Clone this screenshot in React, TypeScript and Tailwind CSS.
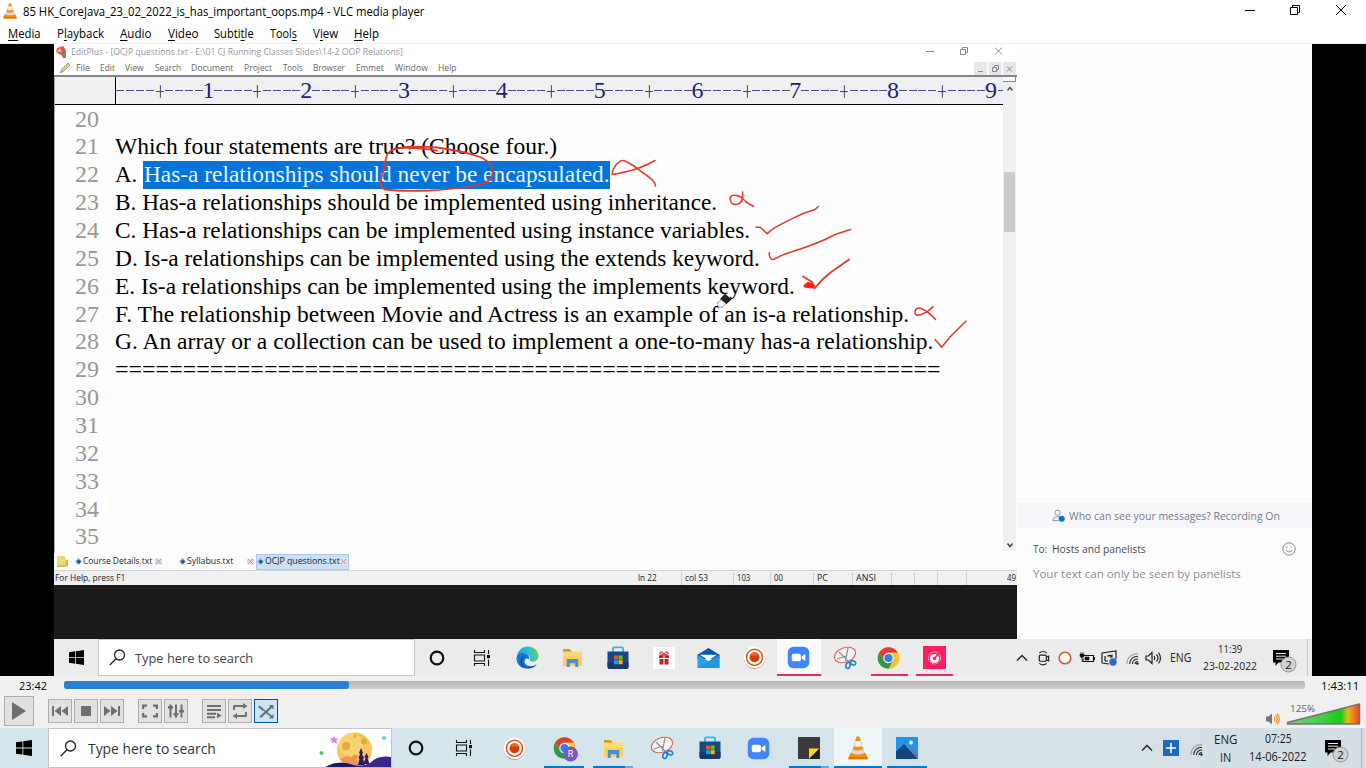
import { useLayoutEffect, useRef, useState, type ReactNode } from "react";

/* Text squeezed or stretched horizontally so that it fills its box. */
function Fit({ c, children }: { c: string; children: ReactNode }) {
  const outer = useRef<HTMLSpanElement>(null);
  const inner = useRef<HTMLSpanElement>(null);
  const [k, setK] = useState(1);
  useLayoutEffect(() => {
    if (outer.current && inner.current) setK(outer.current.offsetWidth / inner.current.offsetWidth);
  }, []);
  return (
    <span ref={outer} className={"block shrink-0 whitespace-nowrap " + c}>
      <span ref={inner} className="inline-block origin-left" style={{ transform: `scaleX(${k})` }}>
        {children}
      </span>
    </span>
  );
}

const Cone = ({ c }: { c: string }) => (
  <svg viewBox="0 0 20 24" preserveAspectRatio="none" className={c}>
    <path d="M2.5 17h15l2.3 5.2q.2 1.3-1 1.3H1.2q-1.2 0-1-1.3z" fill="#f08a0c" />
    <path d="M8.5.8q1.5-1 3 0L17 19q-7 4-14 0z" fill="#f58f12" />
    <path d="M7.4 5h5.2l1.5 5q-4 1.8-8.2 0z" fill="#e9edf0" />
    <path d="M4.7 13.5q5.300 2.200 10.600 0l1 3.700q-6.200 2.600-12.600 0z" fill="#d5dbe0" />
    <path d="M1 22h18" stroke="#c96405" strokeWidth="1" />
  </svg>
);
const Win = ({ c }: { c: string }) => (
  <svg viewBox="0 0 16 16" className={c}>
    <path d="M0 2.300 6.500 1.400v6.200H0zM7.300 1.300 16 0v7.600H7.300zM0 8.400h6.500v6.200L0 13.700zM7.300 8.400H16V16l-8.700-1.300z" fill="#000" />
  </svg>
);
const Search = () => (
  <svg viewBox="0 0 17 17" className="size-[17px] shrink-0" fill="none" stroke="#222" strokeWidth="1.300">
    <circle cx="10.500" cy="6" r="5" /><path d="M7 9.800.8 16" />
  </svg>
);
const Ring = () => (
  <svg viewBox="0 0 16 16" className="size-4"><circle cx="8" cy="8" r="6.300" fill="none" stroke="#111" strokeWidth="2.200" /></svg>
);
const TaskView = () => (
  <svg viewBox="0 0 18 16" className="h-4 w-[18px]" fill="none" stroke="#111" strokeWidth="1.100">
    <path d="M1.500 0v2.500h10V0M1.500 16v-2.500h10V16M1.500 5h10v6h-10zM15.500 0v4M15.500 9.500V16" /><path d="M14 5h3v3.200h-3z" fill="#111" stroke="none" />
  </svg>
);
const Edge = () => (
  <svg viewBox="0 0 24 24" className="size-[23px]">
    <defs>
      <linearGradient id="eg" x1="0" x2="1" y1=".3" y2=".2"><stop offset="0" stopColor="#1d9fe0" /><stop offset=".55" stopColor="#2bc3c8" /><stop offset="1" stopColor="#6cd251" /></linearGradient>
    </defs>
    <path d="M1 11C2 4.500 6.500.5 12.300.5 18.500.5 23.500 5 23.500 10.300c0 4-3 6-6 6-2.500 0-3.800-1-3.300-2 1.500-2.500-.5-5.800-4.500-5.800C5 8.500 2 10 1 11z" fill="url(#eg)" />
    <path d="M.5 12.500C1 8 5 6.500 9.500 7.700 13.500 8.800 14.500 12 13.300 14c-1-1.600-4.500-1.200-4.300 2.500.2 3.500 4.500 5.500 9.500 4-2 2-4.500 3-7.500 3C5 23.500.2 18.500.5 12.500z" fill="#1478cc" />
    <path d="M9 10.500c-2.500 2-3.600 6-1.200 9.200 2.500 3.400 8 3.600 13.700-1-1 2-3 3.800-5 4.200-6 1.500-11.500-1-12-5.500C4.200 14 6 11 9 10.500z" fill="#164e9e" />
  </svg>
);
const Folder = () => (
  <svg viewBox="0 0 22 20" className="h-[19px] w-[21px]">
    <path d="M1 1h7l2 2.500v4H1z" fill="#d99b16" /><path d="M1 4h20v15H1z" fill="#ffcf5c" /><path d="M1 4h20v5H1z" fill="#ffda7b" />
    <path d="M5 11.500h12V20h-3v-4H8v4H5z" fill="#3f93d3" />
  </svg>
);
const Store = () => (
  <svg viewBox="0 0 24 24" className="size-6">
    <path d="M7 6.500V2.600q0-1.300 1.300-1.300h7.400Q17 1.300 17 2.600v3.900" fill="none" stroke="#34b5ea" strokeWidth="1.800" />
    <path d="M1.500 5.500h21v15q0 2.500-2.500 2.500H4q-2.500 0-2.500-2.500z" fill="#174a80" />
    <path d="M1.500 16h21v4.500Q22.500 23 20 23H4q-2.500 0-2.500-2.500z" fill="#17396b" />
    <path d="M8 9.500h4v4H8z" fill="#f25022" /><path d="M12.600 9.500h4v4h-4z" fill="#7fba00" /><path d="M8 14.200h4v4H8z" fill="#00a4ef" /><path d="M12.600 14.200h4v4h-4z" fill="#ffb900" />
  </svg>
);
const Gift = () => (
  <svg viewBox="0 0 22 22" className="size-[22px]">
    <path d="M0 0h22v22H0z" fill="#fff" /><path d="M6 8.300h4.500v2.800H6zM11.500 8.300H16v2.800h-4.500zM6.500 12h4v5.500h-4zM11.500 12h4v5.500h-4z" fill="#b9261e" />
    <path d="M11 8Q6 7.500 7 5.300 9 3.500 11 8q2-4.500 4-2.700Q16 7.500 11 8z" fill="none" stroke="#d2453a" strokeWidth="1.200" />
  </svg>
);
const Mail = () => (
  <svg viewBox="0 0 24 22" className="h-[22px] w-[23px]">
    <path d="M.5 7.500 12 .5l11.500 7V12H.5z" fill="#0758ae" />
    <path d="M.5 7.500 12 14.500l11.500-7v14H.5z" fill="#2ba4e8" /><path d="M23.500 7.500v14H.5z" fill="#1c8fdc" opacity=".65" /><path d="M3 7.500h18l-9 6z" fill="#f6fafd" />
  </svg>
);
const Rec = () => (
  <svg viewBox="0 0 24 24" className="size-[23px]">
    <circle cx="12" cy="12.800" r="11" fill="#8f8480" /><circle cx="12" cy="11.800" r="11.200" fill="#fff" />
    <circle cx="12" cy="11.800" r="8.400" fill="none" stroke="#d9531b" strokeWidth="1.500" /><circle cx="12" cy="11.800" r="5.200" fill="#d83a04" /><path d="M7.300 10a5 5 0 0 1 9.400 0z" fill="#ec6a1a" />
  </svg>
);
const Zoom = () => (
  <svg viewBox="0 0 24 24" className="size-[23px]">
    <rect x=".8" y=".8" width="22.400" height="22.400" rx="6" fill="#3f86fb" />
    <rect x="5" y="8" width="9.500" height="8" rx="1.800" fill="#fff" /><path d="m15.200 11 4-2.700v7.400l-4-2.700z" fill="#fff" />
  </svg>
);
const Snip = () => (
  <svg viewBox="0 0 24 24" className="size-6" fill="none">
    <ellipse cx="12" cy="9" rx="11" ry="7.200" transform="rotate(-20 12 9)" fill="#f8f4f3" stroke="#dc635e" strokeWidth="1.100" />
    <path d="M6 6l10 10M15 2 12.500 15M4 13l9-3" stroke="#89929a" strokeWidth="1.300" />
    <ellipse cx="15" cy="19.500" rx="2.100" ry="3" transform="rotate(15 15 19.500)" stroke="#1b83ca" strokeWidth="1.600" />
    <ellipse cx="20" cy="16.800" rx="2.800" ry="1.900" transform="rotate(25 20 16.800)" stroke="#1b83ca" strokeWidth="1.600" />
  </svg>
);
const Chrome = ({ badge }: { badge?: boolean }) => (
  <svg viewBox="0 0 25 26" className="h-[26px] w-[25px]">
    <circle cx="11.500" cy="12" r="10.800" fill="#f9c623" />
    <path d="M2.150 6.600A10.800 10.800 0 0 1 20.850 6.600H11.500l-4.700 8z" fill="#e0402f" />
    <path d="M2.150 6.600A10.800 10.800 0 0 0 11.500 22.800l4.700-8.100H6.800z" fill="#2d9a4b" />
    <circle cx="11.500" cy="12" r="5.200" fill="#fff" /><circle cx="11.500" cy="12" r="4.100" fill="#3b7de8" />
    {badge && <circle cx="17.500" cy="18" r="7.500" fill="#7e57c2" />}
    {badge && <text x="17.500" y="21.300" textAnchor="middle" fontSize="9" fontFamily="Roboto, sans-serif" fill="#fff">R</text>}
  </svg>
);
const Timer = () => (
  <svg viewBox="0 0 23 23" className="size-[23px]">
    <path d="M0 0h23v23H0z" fill="#ff1d5e" /><circle cx="11.500" cy="12" r="6" fill="none" stroke="#fff" strokeWidth="1" strokeDasharray="1 .8" />
    <circle cx="11.500" cy="12.500" r="4.600" fill="#fff" /><circle cx="11.500" cy="12.500" r="1.700" fill="#ff1d5e" /><path d="m11.500 12.500 4-5" stroke="#ff1d5e" strokeWidth="1.300" />
  </svg>
);
const Notes = () => (
  <svg viewBox="0 0 22 22" className="size-[22px]"><path d="M0 0h22v22H0z" fill="#3a3a3a" /><path d="M11 11.500h10.500L11 22z" fill="#ffd814" /><path d="M21.500 11.500V22H11z" fill="#222" /></svg>
);
const Photos = () => (
  <svg viewBox="0 0 22 22" className="size-[22px]">
    <path d="M0 0h22v22H0z" fill="#2196e8" /><path d="M10 14.500 15 10l7 7.500V22H8z" fill="#6377b5" /><path d="M0 14.500 8 7l13.500 15H0z" fill="#13447c" /><circle cx="15" cy="5.500" r="1.900" fill="#fff" />
  </svg>
);
const Wifi = () => (
  <svg viewBox="0 0 14 14" className="size-[13px] shrink-0" fill="none" strokeWidth="1.100">
    <path d="M1 13C1 6 6 1.500 13 1.500" stroke="#999" /><path d="M4 13C4 8 7.500 4.500 13 4.500M7 13c0-3.500 2.500-5.500 6-5.500M9.800 13c0-1.500 1.200-2.700 3.200-2.700" stroke="#222" /><circle cx="12.300" cy="12.500" r="1.300" fill="#111" />
  </svg>
);
const Chev = () => (
  <svg viewBox="0 0 12 8" className="h-2 w-3 shrink-0" fill="none" stroke="#222" strokeWidth="1.400"><path d="m1 6.500 5-5 5 5" /></svg>
);
const Notif = () => (
  <svg viewBox="0 0 26 26" className="size-[26px] shrink-0">
    <path d="M1 2h16v12.500H6.500L3.500 18v-3.500H1z" fill="#000" /><path d="M4 5.500h10M4 8.200h10M4 11h7" stroke="#eee" strokeWidth="1" />
    <circle cx="16.500" cy="16.500" r="7.500" fill="#d1d3d4" stroke="#929292" /><text x="16.500" y="20.500" textAnchor="middle" fontSize="11.500" fontFamily="Open Sans, sans-serif" fill="#111">2</text>
  </svg>
);
const WinButtons = () => (
  <div className="flex pt-[5px]">
    <svg viewBox="0 0 10 10" className="mr-[35px] size-[10px]"><path d="M0 5.500h10" stroke="#000" /></svg>
    <svg viewBox="0 0 10 10" className="mr-[36px] size-[10px]" fill="none" stroke="#000"><path d="M.5 2.500h7v7h-7zM2.500 2.500v-2h7v7h-2" /></svg>
    <svg viewBox="0 0 10 10" className="mr-[20px] size-[10px]"><path d="m0 0 10 10M10 0 0 10" stroke="#000" /></svg>
  </div>
);

const menus: [string, string, string, string][] = [
  ["", "M", "edia", "w-[33px]"], ["P", "l", "ayback", "w-[47px]"], ["", "A", "udio", "w-[32px]"], ["", "V", "ideo", "w-[30px]"],
  ["Subti", "t", "le", "w-[40px]"], ["Tool", "s", "", "w-[27px]"], ["V", "i", "ew", "w-[25px]"], ["", "H", "elp", "w-[25px]"],
];
const editMenus = [
  ["File", "ml-[5px] w-[14px]"], ["Edit", "ml-[10px] w-[15px]"], ["View", "ml-[10px] w-[19px]"], ["Search", "ml-[11px] w-[26px]"],
  ["Document", "ml-[10px] w-[42px]"], ["Project", "ml-[11px] w-[28px]"], ["Tools", "ml-[11px] w-[20px]"], ["Browser", "ml-[10px] w-[32px]"],
  ["Emmet", "ml-[11px] w-[28px]"], ["Window", "ml-[11px] w-[33px]"], ["Help", "ml-[10px] w-[19px]"],
];
const lines = [
  ["", ""],
  ["Which four statements are true? (Choose four.)", "w-[442px]"],
  ["", ""],
  ["B. Has-a relationships should be implemented using inheritance.", "w-[602px]"],
  ["C. Has-a relationships can be implemented using instance variables.", "w-[635px]"],
  ["D. Is-a relationships can be implemented using the extends keyword.", "w-[645px]"],
  ["E. Is-a relationships can be implemented using the implements keyword.", "w-[680px]"],
  ["F. The relationship between Movie and Actress is an example of an is-a relationship.", "w-[794px]"],
  ["G. An array or a collection can be used to implement a one-to-many has-a relationship.", "w-[818px]"],
  ["=============================================================", "w-[826px]"],
  ["", ""], ["", ""], ["", ""], ["", ""], ["", ""], ["", ""],
];
const ruler = Array.from({ length: 90 }, (_, i) => ((i + 1) % 10 === 0 ? String((i + 1) / 10) : (i + 1) % 5 === 0 ? "+" : "-"));

const Diamond = ({ c }: { c: string }) => (
  <svg viewBox="0 0 7 7" className={"size-[7px] shrink-0 " + c}><path d="m3.500 0 3.500 3.500L3.500 7 0 3.500z" fill="#8aa9c9" /><circle cx="3.800" cy="3.700" r="1.800" fill="#1b5796" /></svg>
);
const Close = ({ c }: { c: string }) => (
  <svg viewBox="0 0 7 7" className={"size-[7px] shrink-0 " + c}><path d="M0 .5h7v6H0z" fill="#eadadd" /><path d="m1 1 5 5M6 1 1 6" stroke="#cf8e95" /></svg>
);

function Editor() {
  return (
    <div className="flex h-[595px] w-[963px] shrink-0 flex-col bg-[#fdfdfd]">
      <div className="flex h-4 items-center bg-white text-[9.500px] text-[#969696]">
        <svg viewBox="0 0 12 12" className="ml-[1px] size-3 shrink-0"><path d="M2 2 8 0l3 4v7L6 9 1 6z" fill="#dc5b4f" /><path d="M6 8h5v4H8z" fill="#5f9b66" /><path d="m1 6 4-4 2 4z" fill="#efada4" /></svg>
        <Fit c="ml-[4px] w-[332px]">EditPlus - [OCJP questions.txt - E:\01 CJ Running Classes Slides\14-2 OOP Relations]</Fit>
        <svg viewBox="0 0 78 10" className="ml-[523px] -mt-[3px] h-[10px] w-[78px] shrink-0" fill="none" stroke="#8b8b8b"><path d="M0 5.500h8M34.500 3.500h5v5h-5zM36.500 3.500v-2h5v5h-2M69 1.500l7 7M76 1.500l-7 7" /></svg>
      </div>
      <div className="flex h-[15px] items-center bg-white pt-px text-[9.500px] text-[#656565]">
        <svg viewBox="0 0 12 12" className="ml-[5px] size-3 shrink-0"><path d="m1 11 2-4 6-6 2 2-6 6z" fill="#d7cf9a" stroke="#8b855d" strokeWidth=".7" /></svg>
        {editMenus.map(([t, c]) => <Fit key={t} c={c}>{t}</Fit>)}
        <svg viewBox="0 0 42 13" className="ml-auto mr-[1px] h-[13px] w-[42px] shrink-0"><path d="M0 0h13v13H0zM14.500 0h13v13h-13zM29 0h13v13H29z" fill="#e7e7e9" /><path d="M4 9.500h5M18.500 5.500h4v4h-4zM20.500 5v-1.500h4v4H23M33 4.500l5 5M38 4.500l-5 5" stroke="#858593" fill="none" /></svg>
      </div>
      <div className="flex h-[478px] border-t-2 border-[#85858a]">
        <div className="flex w-[949px] shrink-0 flex-col border-l border-[#aaa]">
          <div className="flex h-[28px] shrink-0 border-b border-black bg-[#f0f0f2] font-['Liberation_Serif',serif] text-[24px] text-[#1e1e7c]">
            <div className="w-[60.500px] shrink-0 border-r border-black" />
            <div className="flex overflow-hidden">
              {ruler.map((r, i) => (
                <span key={i} className="flex w-[9.790px] shrink-0 items-center justify-center leading-[26px]">
                  {r === "-" ? <i className="block h-px w-[8px] bg-[#4a4a86]" /> : r === "+" ? (
                    <svg viewBox="0 0 10 16" className="h-4 w-[10px]"><path d="M1 8.500h8M5.500 2v13" stroke="#3c3c80" /></svg>
                  ) : <b className="-mt-px font-normal">{r}</b>}
                </span>
              ))}
              <span className="flex items-center pl-[2px]"><i className="block h-px w-[5px] bg-[#4a4a86]" /></span>
            </div>
          </div>
          <div className="flex flex-col pt-[0.600px] font-['Liberation_Serif',serif] text-[24px] leading-[27.870px] text-black">
            {lines.map(([t, c], i) => (
              <div key={i} className="flex h-[27.870px] items-center">
                <span className="w-[60px] shrink-0 pl-[20px] text-[#979797]">{20 + i}</span>
                {i === 2 && (
                  <>
                    <Fit c="w-[22px]">A.</Fit>
                    <span className="ml-[6px] flex h-[28px] items-center bg-[#0474da] pl-px text-[#e8f3ff]"><Fit c="w-[466px]">Has-a relationships should never be encapsulated.</Fit></span>
                  </>
                )}
                {t && <Fit c={c}>{t}</Fit>}
              </div>
            ))}
          </div>
        </div>
        <div className="flex h-[474px] w-[13px] flex-col items-center bg-[#f0eff1]">
          <div className="h-[5px] w-full border-b border-r border-[#888] bg-[#f8f8f8]" />
          <svg viewBox="0 0 8 6" className="mt-[4px] h-[6px] w-2" fill="none" stroke="#555" strokeWidth="1.500"><path d="m1.500 4.500 2.500-3 2.500 3" /></svg>
          <div className="mt-[80px] h-[60px] w-[11px] bg-[#cbcacc]" />
          <svg viewBox="0 0 8 6" className="mt-auto mb-[3px] h-[6px] w-2" fill="none" stroke="#444" strokeWidth="1.500"><path d="m1.500 1.500 2.500 3 2.500-3" /></svg>
        </div>
      </div>
      <div className="flex h-[17px] items-center text-[9.500px] text-[#222]">
        <svg viewBox="0 0 12 12" className="ml-[3px] size-[11px] shrink-0"><path d="M0 0h9v12H0z" fill="#efd779" /><path d="M9 4h3v7H9z" fill="#dcb743" /><path d="M0 10h10v2H0z" fill="#dabb51" /></svg>
        <Diamond c="ml-[7px]" /><Fit c="ml-[1px] w-[69px]">Course Details.txt</Fit><Close c="ml-[3px]" />
        <Diamond c="ml-[17px]" /><Fit c="ml-[1px] w-[46px]">Syllabus.txt</Fit><Close c="ml-[14px]" />
        <div className="ml-[2px] flex h-4 w-[93px] items-center border border-[#a9c7e8] bg-[#cbe0fa]">
          <Diamond c="" /><Fit c="ml-[1px] w-[75px]">OCJP questions.txt</Fit><Close c="" />
        </div>
      </div>
      <div className="flex h-[15px] shrink-0 items-center border-t border-[#d4d4d6] bg-[#f0eff1] pt-px text-[9.500px] text-[#222]">
        <Fit c="ml-[1px] w-[70px]">For Help, press F1</Fit>
        <Fit c="ml-[513px] w-[19px]">ln 22</Fit>
        {[["col 53", "w-[23px]", "ml-[24px] w-[52px]"], ["103", "w-[13px]", "w-[37px]"], ["00", "w-[9px]", "w-[43px]"], ["PC", "w-[11px]", "w-[39px]"], ["ANSI", "w-[20px]", "w-[39px]"]].map(([t, c, b]) => (
          <div key={t} className={"flex h-full shrink-0 items-center border-l border-[#d0d0d0] pl-[3px] " + b}><Fit c={c}>{t}</Fit></div>
        ))}
        <div className="h-full w-[23px] border-l border-[#d0d0d0]" /><div className="h-full w-[23px] border-l border-[#d0d0d0]" /><div className="h-full w-[29px] border-l border-[#d0d0d0]" />
        <div className="flex h-full items-center border-l border-[#d0d0d0] pl-[40px]"><Fit c="w-[9px]">49</Fit></div>
      </div>
      <div className="grow bg-[#1a1a1a]" />
    </div>
  );
}

/* Pen strokes and the eraser pointer drawn over the lesson text. */
const Ink = () => (
  <svg viewBox="54 44 963 595" className="pointer-events-none absolute left-0 top-0 h-[595px] w-[963px]" fill="none" stroke="#e23a2c" strokeWidth="1.500" strokeLinecap="round" strokeLinejoin="round">
    <path d="M437 150.700Q420 147.500 400 148Q388 149 386 158Q385 166 382.500 174Q378 187 385 189.500Q400 191.500 430 190.500Q465 188.500 483 183.500Q494 180 492.500 169Q491 162 480 157Q463 151 437 147.500Q420 146 405 147" strokeWidth="1.800" />
    <path d="M655 160.500Q642 168 627 171.500Q616 174 612.500 174.500Q611 172 616 165Q621 159 625 161Q635 166 641 171.500Q656 181 655.500 186" />
    <path d="M742.500 192Q744 202 738 204Q731 206 730 199Q730 194 737 195.500Q742 197 746 202L753.500 206.500" />
    <path d="M756 227.300h4l7.300 6.300 5-4.300q5-3.300 20-10.600Q804 212.500 815 209.500l3.300-3" />
    <path d="M769.500 252.700q-1 4 1.500 6 2 2 5-.5 7-4 16-6.500Q820 243 835 234.500l15.600-5" />
    <path d="m803 276.500 9 5.500 2.500 6.500Q824 277 832 271.500q10-7 17-12" strokeWidth="1.800" />
    <path d="m805 286 3-2.500 5 1.500 0 2-6-.5" strokeWidth="3" stroke="#fb2616" />
    <path d="M935.500 319.500Q928 311 920 308q-5-.5-5 4.500 0 4 6 2Q930 311 933 306.500" />
    <path d="m935 339.500 4 4.500 2.500 3.300q4-4.800 9-10.800L966 321" />
    <path d="m717.500 303 5.500-5 4 5-5 4.500q-5 0-4.500-4.500z" fill="#fafafa" stroke="#888" strokeWidth=".8" /><path d="m720 299 5-5.500 6.500 6-5 4.500z" fill="#222" stroke="none" />
  </svg>
);

function Chat() {
  return (
    <div className="flex w-[295px] flex-col bg-[#fdfdfd]">
      <div className="mt-[459px] flex h-[25px] items-center bg-[#f7f7fb] text-[11.500px] text-[#777988]">
        <svg viewBox="0 0 14 14" className="ml-[35px] size-[13px] shrink-0" fill="none" stroke="#8b8b96"><circle cx="6" cy="4" r="2.800" /><path d="M7 12.500H1q0-4 5-4h3" /><circle cx="10.500" cy="10.500" r="3.300" fill="#0b6ee8" stroke="none" /></svg>
        <Fit c="ml-[4px] w-[211px]">Who can see your messages? Recording On</Fit>
      </div>
      <div className="mt-[13px] flex h-4 items-center text-[11.500px] text-[#4c4c55]">
        <Fit c="ml-[16px] w-[14px]">To:</Fit><Fit c="ml-[5px] w-[94px]">Hosts and panelists</Fit>
        <svg viewBox="0 0 14 14" className="ml-[136px] size-[14px] shrink-0" fill="none" stroke="#888"><circle cx="7" cy="7" r="6.200" /><path d="M4 8q3 4 6 0" /><path d="M5 4.500v1.500M9 4.500v1.500" /></svg>
      </div>
      <Fit c="ml-[16px] mt-[9px] w-[208px] text-[11.500px] leading-4 text-[#8c8c99]">Your text can only be seen by panelists</Fit>
    </div>
  );
}

function InnerTaskbar() {
  return (
    <div className="flex h-[37px] bg-[#ebebec] text-[#222]">
      <div className="flex w-[44px] items-center justify-center"><Win c="size-[15px]" /></div>
      <div className="flex h-[37px] w-[317px] items-center border border-[#c8c8c8] bg-white pl-[10px] text-[#444]"><Search /><Fit c="ml-[9px] mt-px w-[118px] text-[13.500px]">Type here to search</Fit></div>
      <div className="flex w-[44px] items-center justify-center"><Ring /></div>
      <div className="flex w-[46px] items-center justify-center"><TaskView /></div>
      {[<Edge />, <Folder />, <Store />, <Gift />, <Mail />, <Rec />].map((e, i) => <div key={i} className="flex w-[45.300px] shrink-0 items-center justify-center">{e}</div>)}
      <div className="flex w-[44px] items-center justify-center border-b-2 border-[#ea2b61] bg-[#fafafa] pt-[2px]"><Zoom /></div>
      <div className="flex w-[48px] items-center justify-center"><Snip /></div>
      <div className="ml-[2px] flex w-[37px] items-center justify-center border-b-2 border-[#ea2b61] pt-[4px] pl-px"><Chrome /></div>
      <div className="ml-[8px] flex w-[37px] items-center justify-center border-b-2 border-[#ea2b61] pt-[2px]"><Timer /></div>
      <div className="ml-auto flex w-[296px] shrink-0 items-center">
        <Chev />
        <svg viewBox="0 0 14 16" className="ml-[9px] h-4 w-[13px] shrink-0" fill="none" stroke="#222" strokeWidth="1.300"><rect x="2.500" y="5" width="7.500" height="6.500" rx="1" /><path d="m10 7 2.500-1v5L10 10M2.500 2.500q4-3 8 0M2.500 13.800q4 3 8 0" /></svg>
        <svg viewBox="0 0 14 14" className="ml-[8px] size-[14px] shrink-0"><circle cx="7" cy="7" r="5.800" fill="#fff6ed" stroke="#c96237" strokeWidth="1.600" /></svg>
        <svg viewBox="0 0 16 14" className="ml-[7px] h-[14px] w-4 shrink-0" fill="none" stroke="#111"><path d="M5 4.500h9.500v6H4v-3" strokeWidth="1.200" /><path d="M14.500 6.500H16v2h-1.500zM6 6h4v3H6zM1 3h4v2.500L3 7 1 5.500zM2 1v2M4 1v2M3 7v4" fill="#111" strokeWidth=".6" /></svg>
        <svg viewBox="0 0 16 16" className="ml-[6px] size-4 shrink-0" fill="none" stroke="#222" strokeWidth="1.200"><path d="M1 13V3l14-2v8M1 13l7 1M4 6v5M4 11h3M11 7q-2-3-4.500-.5M11 4.500V7H8.500" /><circle cx="12" cy="12" r="3.700" fill="#2b6cb8" stroke="none" /></svg>
        <span className="ml-[9px] mt-[2px] flex"><Wifi /></span>
        <svg viewBox="0 0 17 14" className="ml-[6px] h-[14px] w-[17px] shrink-0" fill="none" stroke="#222" strokeWidth="1.200"><path d="M1 5h2.500L7 1.500v11L3.500 9H1zM9 5q1.500 2 0 4M11.500 3.500q3 3.500 0 7M13.500 1.500q4 5.500 0 11" /></svg>
        <Fit c="ml-[8px] w-[21px] text-[12px]">ENG</Fit>
        <div className="ml-[12px] flex w-[54px] flex-col items-center text-[11.500px] leading-[16.500px]"><Fit c="w-[24px]">11:39</Fit><Fit c="w-[54px]">23-02-2022</Fit></div>
        <span className="ml-[15px] mt-[7px]"><Notif /></span>
        <span className="ml-auto mr-[4px] h-full w-px bg-[#c6c6c6]" />
      </div>
    </div>
  );
}

const Btn = ({ m = "", on, children }: { m?: string; on?: boolean; children: ReactNode }) => (
  <div className={"flex size-6 shrink-0 items-center justify-center border " + m + (on ? " border-[#0054a4] bg-[#cce4f7]" : " border-[#adadad] bg-[#e1e1e1]")}>
    <svg viewBox="0 0 16 16" className="size-4" fill="#6f6f6f">{children}</svg>
  </div>
);

function Controls() {
  return (
    <div className="flex h-[52px] shrink-0 flex-col bg-[#f0f0f0]">
      <div className="flex h-[20px] items-center text-[11px] text-black">
        <Fit c="ml-[19px] w-[28px]">23:42</Fit>
        <div className="ml-[17px] mb-[2px] h-[8px] w-[1241px] rounded-[2px] bg-linear-to-b from-[#b4b4b4] to-[#cfcfcf]"><div className="h-[8px] w-[285px] rounded-[3px] bg-[#2a80d2]" /></div>
        <Fit c="ml-[16px] w-[38px]">1:43:11</Fit>
      </div>
      <div className="flex h-[30px] items-center">
        <div className="ml-[4px] flex size-[30px] items-center justify-center border border-[#adadad] bg-[#e1e1e1]"><svg viewBox="0 0 14 18" className="h-[18px] w-[14px]"><path d="m0 0 14 9-14 9z" fill="#6f6f6f" /></svg></div>
        <Btn m="ml-[14px]"><path d="M0 3h2v10H0zM9 3v10L2.500 8zM16 3v10L9.500 8z" /></Btn>
        <Btn m="ml-[2px]"><path d="M3 3h10v10H3z" /></Btn>
        <Btn m="ml-[2px]"><path d="M14 3h2v10h-2zM0 3v10l6.500-5zM7 3v10l6.500-5z" /></Btn>
        <Btn m="ml-[14px]"><path d="M0 1.500h5v2.200H2.200V6H0zM11 1.500h5V6h-2.200V3.700H11zM0 10h2.200v2.300H5v2.200H0zM13.800 10H16v4.500h-5v-2.200h2.800z" /></Btn>
        <Btn m="ml-[2px]"><path d="M1.500 1.500h2v13h-2zM7 1.500h2v13H7zM12.500 1.500h2v13h-2zM0 3h5v2.500H0zM5.500 10h5v2.500h-5zM11 7h5v2.500h-5z" /></Btn>
        <Btn m="ml-[14px]"><path d="M1 2h14v2H1zM1 6h14v2H1zM1 9.800h9v2H1zM1 13.300h8v2H1zM11 9.500l4.500 3-4.500 3z" /></Btn>
        <Btn m="ml-[2px]"><path d="M1 7V3q0-1 1-1h9V0l4.500 3L11 6V4H3v3zM15 9v4q0 1-1 1H5v2L.5 13 5 10v2h8V9z" /></Btn>
        <Btn m="ml-[2px]" on><path d="M1 3.500h2l9 8.500h-2zM11 2h4.500v4.500L13.800 5 3 15l-1.700-1.500L12.300 3.500zM1.300 2.500 6 6.500 4.800 8 0 4zM9.500 9l4.300 3.500 1.700-1.500V15.500H11l1.500-1.700-4.300-3.500z" /></Btn>
        <svg viewBox="0 0 14 12" className="ml-[988px] mt-[16px] h-3 w-[14px] shrink-0"><path d="M0 3.500h2.500L6 .5v11l-3.500-3H0z" fill="#777" /><path d="M8 4q1.500 2 0 4M9.500 2q3.500 4 0 8M11 .5q4.500 5.500 0 11" fill="none" stroke="#ee9b26" strokeWidth="1.300" /></svg>
        <div className="relative ml-[6px] mt-[5px] h-[24px] w-[76px]">
          <svg viewBox="0 0 76 24" className="h-6 w-[76px]"><defs><linearGradient id="vol"><stop offset="0" stopColor="#7dd17d" /><stop offset=".4" stopColor="#4fce4f" /><stop offset=".74" stopColor="#17cb17" /><stop offset=".84" stopColor="#e7bc18" /><stop offset="1" stopColor="#f0402a" /></linearGradient></defs><path d="M1.500 20.500 73.500 2v20H1.500z" fill="url(#vol)" stroke="#747474" strokeWidth="1.500" strokeLinejoin="round" /></svg>
          <Fit c="absolute left-[4px] top-0 w-[25px] text-[9.500px] leading-[13px] text-[#666]">125%</Fit>
        </div>
      </div>
    </div>
  );
}

const Moon = () => (
  <svg viewBox="316 728 75 38" className="ml-auto h-[38px] w-[75px] shrink-0">
    <circle cx="354.500" cy="749" r="17.500" fill="#f5c45c" /><circle cx="351" cy="744" r="12" fill="#fbd77b" opacity=".7" /><path d="M340 758q7 10 20 7l-4-8-9-2z" fill="#e88654" opacity=".75" />
    <circle cx="346" cy="745" r="4" fill="#e5a940" /><circle cx="364" cy="740.500" r="3" fill="#e5a940" /><circle cx="355" cy="735" r="1.800" fill="#e5ab45" /><circle cx="355" cy="756" r="2.500" fill="#e59443" />
    <path d="M324 767q12-8 26-4 11 4 20-1 8-8 21-6v12h-67z" fill="#3b258d" /><path d="M324 767q12-8 26-4l12 6h-38z" fill="#21155f" />
    <path d="m361 747 2 5-1 1 2 4-1 1 2 6h-7l1.500-6-1-1 1.500-4-1-1zM366.500 752l2 4-1 1 2 6h-6l2-6-1-1z" fill="#291a68" />
    <path d="m334 735 1.300 2.500 3 .3-2 2 1 3-3.300-1.500-2.500 1 .3-2.800-2-2 3.200-.5z" fill="#e07bf0" /><circle cx="384" cy="737" r="2" fill="#62cde5" /><circle cx="321.500" cy="752" r="2" fill="#50cf6b" />
  </svg>
);

function OuterTaskbar() {
  return (
    <div className="flex h-10 shrink-0 bg-linear-to-r from-[#d3e4ec] via-[#d4e5eb] to-[#d5dfe5] text-[#1b1b1b]">
      <div className="flex w-[48px] items-center justify-center"><Win c="size-4" /></div>
      <div className="flex w-[344px] items-center border border-[#c4c7c8] bg-white pl-[11px] text-[#333]"><Search /><Fit c="ml-[11px] w-[128px] text-[14px]">Type here to search</Fit><Moon /></div>
      <div className="flex w-[48px] items-center justify-center"><Ring /></div>
      <div className="flex w-[48px] items-center justify-center"><TaskView /></div>
      <div className="ml-[2px] flex w-[48px] items-center justify-center"><Rec /></div>
      <div className="ml-[6px] flex w-[40px] items-center justify-center border-b-2 border-[#0077d3] pt-[4px] pl-[2px]"><Chrome badge /></div>
      <div className="ml-[9px] flex w-[40px] flex-col items-center"><div className="flex h-[38px] items-center pt-[2px]"><Folder /></div><div className="flex h-[2px] w-full bg-[#69a9df]"><i className="w-[32px] bg-[#0077d3]" /></div></div>
      <div className="ml-[4px] flex w-[49px] items-center justify-center"><Snip /></div>
      <div className="flex w-[48px] items-center justify-center"><Store /></div>
      <div className="flex w-[49px] items-center justify-center"><Zoom /></div>
      <div className="ml-[6px] flex w-[40px] flex-col items-center"><div className="flex h-[38px] items-center pt-[2px]"><Notes /></div><div className="flex h-[2px] w-full bg-[#69a9df]"><i className="w-[32px] bg-[#0077d3]" /></div></div>
      <div className="ml-[5px] flex w-[48px] items-center justify-center border-b-2 border-[#0077d3] bg-[#f0f5f8] pt-[2px]"><Cone c="h-6 w-5" /></div>
      <div className="ml-[5px] flex w-[40px] items-center justify-center border-b-2 border-[#0077d3] pt-[2px]"><Photos /></div>
      <div className="ml-auto flex w-[225px] shrink-0 items-center">
        <Chev />
        <svg viewBox="0 0 16 16" className="ml-[10px] size-4 shrink-0"><path d="M0 0h16v16H0z" fill="#1c69bf" /><path d="M8 3v10M3 8h10" stroke="#fff" strokeWidth="1.600" /></svg>
        <span className="ml-[11px] mt-[3px]"><Wifi /></span>
        <div className="ml-[10px] flex w-[24px] flex-col items-center pt-px text-[12px] leading-[18px]"><Fit c="w-[23px]">ENG</Fit><Fit c="w-[11px]">IN</Fit></div>
        <div className="ml-[12px] flex w-[58px] flex-col items-center text-[12px] leading-[18px]"><Fit c="w-[27px]">07:25</Fit><Fit c="w-[58px]">14-06-2022</Fit></div>
        <span className="ml-[17px] mt-[5px]"><Notif /></span>
        <span className="ml-[11px] h-full w-px bg-[#aebbc2]" />
      </div>
    </div>
  );
}

export default function App() {
  return (
    <div className="flex h-[768px] w-[1366px] flex-col overflow-hidden bg-white font-['Open_Sans','Noto_Sans',sans-serif]">
      <div className="flex h-6 shrink-0 justify-between">
        <div className="flex items-center text-[12px] text-black"><Cone c="ml-[3px] -mt-[2px] h-4 w-[14px]" /><Fit c="ml-[6px] w-[401px]">85 HK_CoreJava_23_02_2022_is_has_important_oops.mp4 - VLC media player</Fit></div>
        <WinButtons />
      </div>
      <div className="flex h-5 shrink-0 items-center gap-4 border-b border-[#efefef] pl-2 text-[12px] text-black">
        {menus.map(([a, u, b, c]) => <Fit key={a + u + b} c={c}>{a}<span className="underline underline-offset-2">{u}</span>{b}</Fit>)}
      </div>
      <div className="flex h-[632px] shrink-0 justify-center bg-black">
        <div className="flex w-[1258px] flex-col">
          <div className="relative flex h-[595px] shrink-0"><Editor /><Chat /><Ink /></div>
          <InnerTaskbar />
        </div>
      </div>
      <Controls />
      <OuterTaskbar />
    </div>
  );
}
